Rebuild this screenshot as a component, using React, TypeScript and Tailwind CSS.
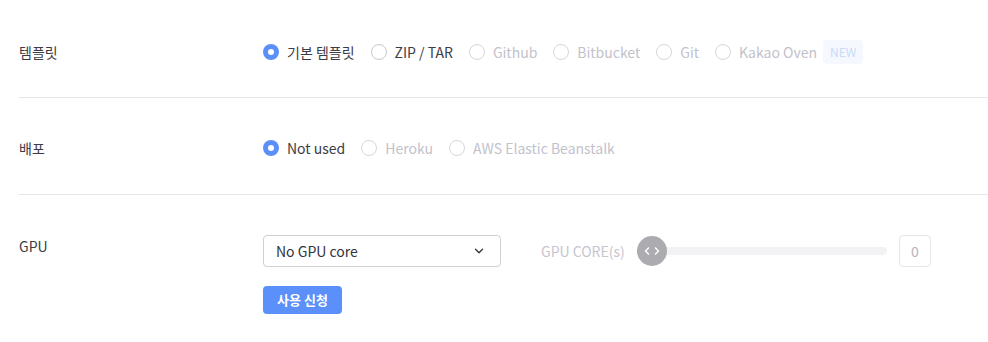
import { ChevronDown } from "lucide-react";

interface Option {
  label: string;
  disabled?: boolean;
  badge?: string;
}

const templateOptions: Option[] = [
  { label: "기본 템플릿" },
  { label: "ZIP / TAR" },
  { label: "Github", disabled: true },
  { label: "Bitbucket", disabled: true },
  { label: "Git", disabled: true },
  { label: "Kakao Oven", disabled: true, badge: "NEW" },
];

const deployOptions: Option[] = [
  { label: "Not used" },
  { label: "Heroku", disabled: true },
  { label: "AWS Elastic Beanstalk", disabled: true },
];

function Radio({ checked, disabled }: { checked?: boolean; disabled?: boolean }) {
  if (checked) {
    return (
      <span className="w-4 h-4 rounded-full bg-[#5b8ff9] flex items-center justify-center shrink-0">
        <span className="w-[6px] h-[6px] rounded-full bg-white" />
      </span>
    );
  }
  return (
    <span
      className={`w-4 h-4 rounded-full border shrink-0 bg-white ${
        disabled ? "border-[#d6d6de]" : "border-[#c8c8d0]"
      }`}
    />
  );
}

function RadioGroup({ options }: { options: Option[] }) {
  return (
    <div className="flex items-center h-6">
      {options.map((opt, i) => (
        <label key={opt.label} className="flex items-center mr-4">
          <Radio checked={i === 0} disabled={opt.disabled} />
          <span
            className={`ml-2 text-[14px] leading-6 ${
              opt.disabled ? "text-[#c2c2cc]" : "text-[#3c3c46]"
            }`}
          >
            {opt.label}
          </span>
          {opt.badge && (
            <span className="ml-[6px] px-[7px] h-6 flex items-center rounded-sm bg-[#f5f8ff] text-[#cbd9f7] text-[12px]">
              {opt.badge}
            </span>
          )}
        </label>
      ))}
    </div>
  );
}

function Row({ label, children, className }: { label: string; children: React.ReactNode; className: string }) {
  return (
    <div className={`flex ${className}`}>
      <div className="w-[244px] shrink-0 text-[14px] leading-6 text-[#3c3c46]">{label}</div>
      <div className="flex-1">{children}</div>
    </div>
  );
}

export default function App() {
  return (
    <div
      className="w-[988px] h-[342px] bg-white pl-[19px]"
      style={{ fontFamily: '"Noto Sans CJK KR", "Noto Sans", sans-serif' }}
    >
      <Row label="템플릿" className="pt-10 pb-[33px] border-b border-[#e6e6ea]">
        <RadioGroup options={templateOptions} />
      </Row>
      <Row label="배포" className="pt-[38px] pb-[34px] border-b border-[#e6e6ea]">
        <RadioGroup options={deployOptions} />
      </Row>
      <Row label="GPU" className="pt-[39px] pb-7">
        <div className="flex items-center mt-[1px]">
          <div className="w-[238px] h-8 border border-[#cfcfd6] rounded-sm flex items-center justify-between pl-3 pr-[14px] text-[14px] text-[#33333d]">
            <span>No GPU core</span>
            <ChevronDown className="w-[14px] h-[14px] text-[#33333d]" strokeWidth={2.2} />
          </div>
          <span className="ml-10 text-[14px] text-[#c6c6ce]">GPU CORE(s)</span>
          <div className="relative ml-[12px] w-[250px] h-[30px] flex items-center">
            <div className="absolute left-[14px] right-0 h-2 rounded-full bg-[#f2f2f5]" />
            <div className="relative w-[30px] h-[30px] rounded-full bg-[#ababb0] flex items-center justify-center text-white">
              <svg width="16" height="10" viewBox="0 0 16 10" fill="none" stroke="white" strokeWidth="1.4">
                <path d="M5 1.5 L1.5 5 L5 8.5" />
                <path d="M11 1.5 L14.5 5 L11 8.5" />
              </svg>
            </div>
          </div>
          <div className="ml-3 w-8 h-8 border border-[#e6e6ea] rounded-sm flex items-center justify-center text-[14px] text-[#b4b4bc]">
            0
          </div>
        </div>
        <button className="mt-[19px] w-[79px] h-7 rounded-sm bg-[#5b8ff9] text-white text-[13px] font-bold">
          사용 신청
        </button>
      </Row>
    </div>
  );
}
